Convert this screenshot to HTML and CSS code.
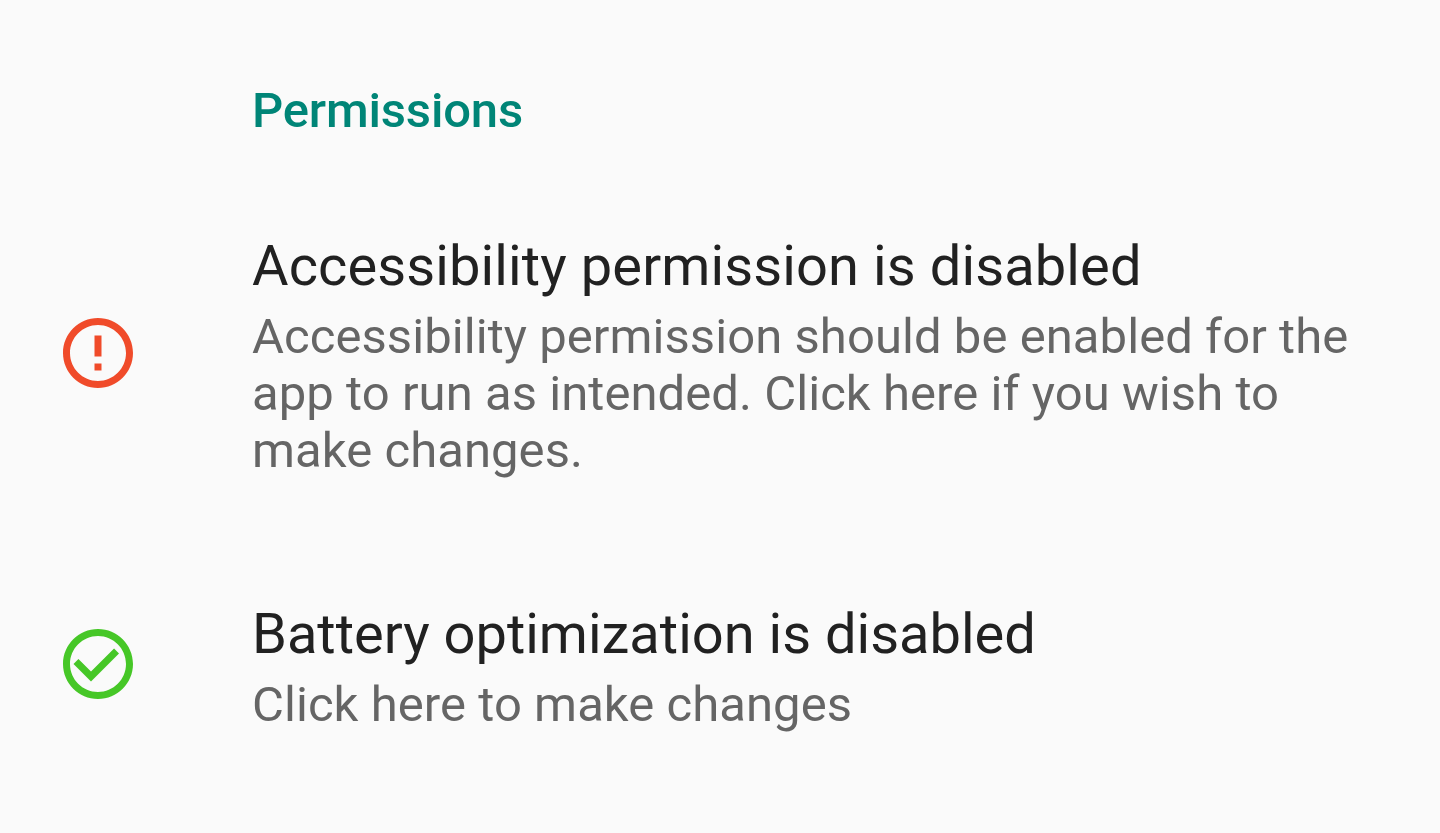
FILE: index.html
```html
<!DOCTYPE html>
<html lang="en">
<head>
<meta charset="utf-8">
<title>Permissions</title>
<link rel="stylesheet" href="styles.css">
</head>
<body>
<main class="settings">
  <h1 class="category">Permissions</h1>
  <section class="preference preference-warning">
    <svg class="icon icon-warning" viewBox="0 0 24 24"><path d="M11 15h2v2h-2zm0-8h2v6h-2zm.99-5C6.47 2 2 6.48 2 12s4.47 10 9.99 10C17.52 22 22 17.52 22 12S17.52 2 11.99 2zM12 20c-4.42 0-8-3.58-8-8s3.58-8 8-8 8 3.58 8 8-3.58 8-8 8z"/></svg>
    <div class="content">
      <h2 class="title title-wide">Accessibility permission is disabled</h2>
      <p class="summary">Accessibility permission should be enabled for the<br>app to run as intended. Click here if you wish to<br>make changes.</p>
    </div>
  </section>
  <section class="preference">
    <svg class="icon icon-ok" viewBox="0 0 24 24"><path d="M12 2C6.48 2 2 6.48 2 12s4.48 10 10 10 10-4.48 10-10S17.52 2 12 2zm0 18c-4.41 0-8-3.59-8-8s3.59-8 8-8 8 3.59 8 8-3.59 8-8 8zm4.59-12.42L10 14.17l-3.59-3.58L5 12l5 5 8-8z"/></svg>
    <div class="content">
      <h2 class="title">Battery optimization is disabled</h2>
      <p class="summary">Click here to make changes</p>
    </div>
  </section>
</main>
</body>
</html>
```
FILE: styles.css
```css
* { box-sizing: border-box; margin: 0; }
body {
  background: #fafafa;
  font-family: Roboto, "Liberation Sans", sans-serif;
  overflow: hidden;
}
.settings { padding: 82px 56px 0; }
.category {
  margin-left: 196px;
  color: #008577;
  font-size: 49px;
  line-height: 57px;
  font-weight: 500;
  letter-spacing: -0.18px;
}
.preference {
  display: flex;
  align-items: center;
  margin-top: 122px;
}
.preference-warning { margin-top: 94px; }
.icon {
  flex: none;
  width: 84px;
  height: 84px;
  margin: 0 112px 6px 0;
}
.icon-warning { fill: #f04b2a; }
.icon-ok { fill: #46c727; }
.content { white-space: nowrap; }
.title {
  color: #212121;
  font-size: 56px;
  line-height: 66px;
  font-weight: 400;
  margin-bottom: 9px;
}
.title-wide { letter-spacing: 0.11px; }
.summary {
  color: #656565;
  font-size: 49px;
  line-height: 57px;
  letter-spacing: 0.06px;
}
```
